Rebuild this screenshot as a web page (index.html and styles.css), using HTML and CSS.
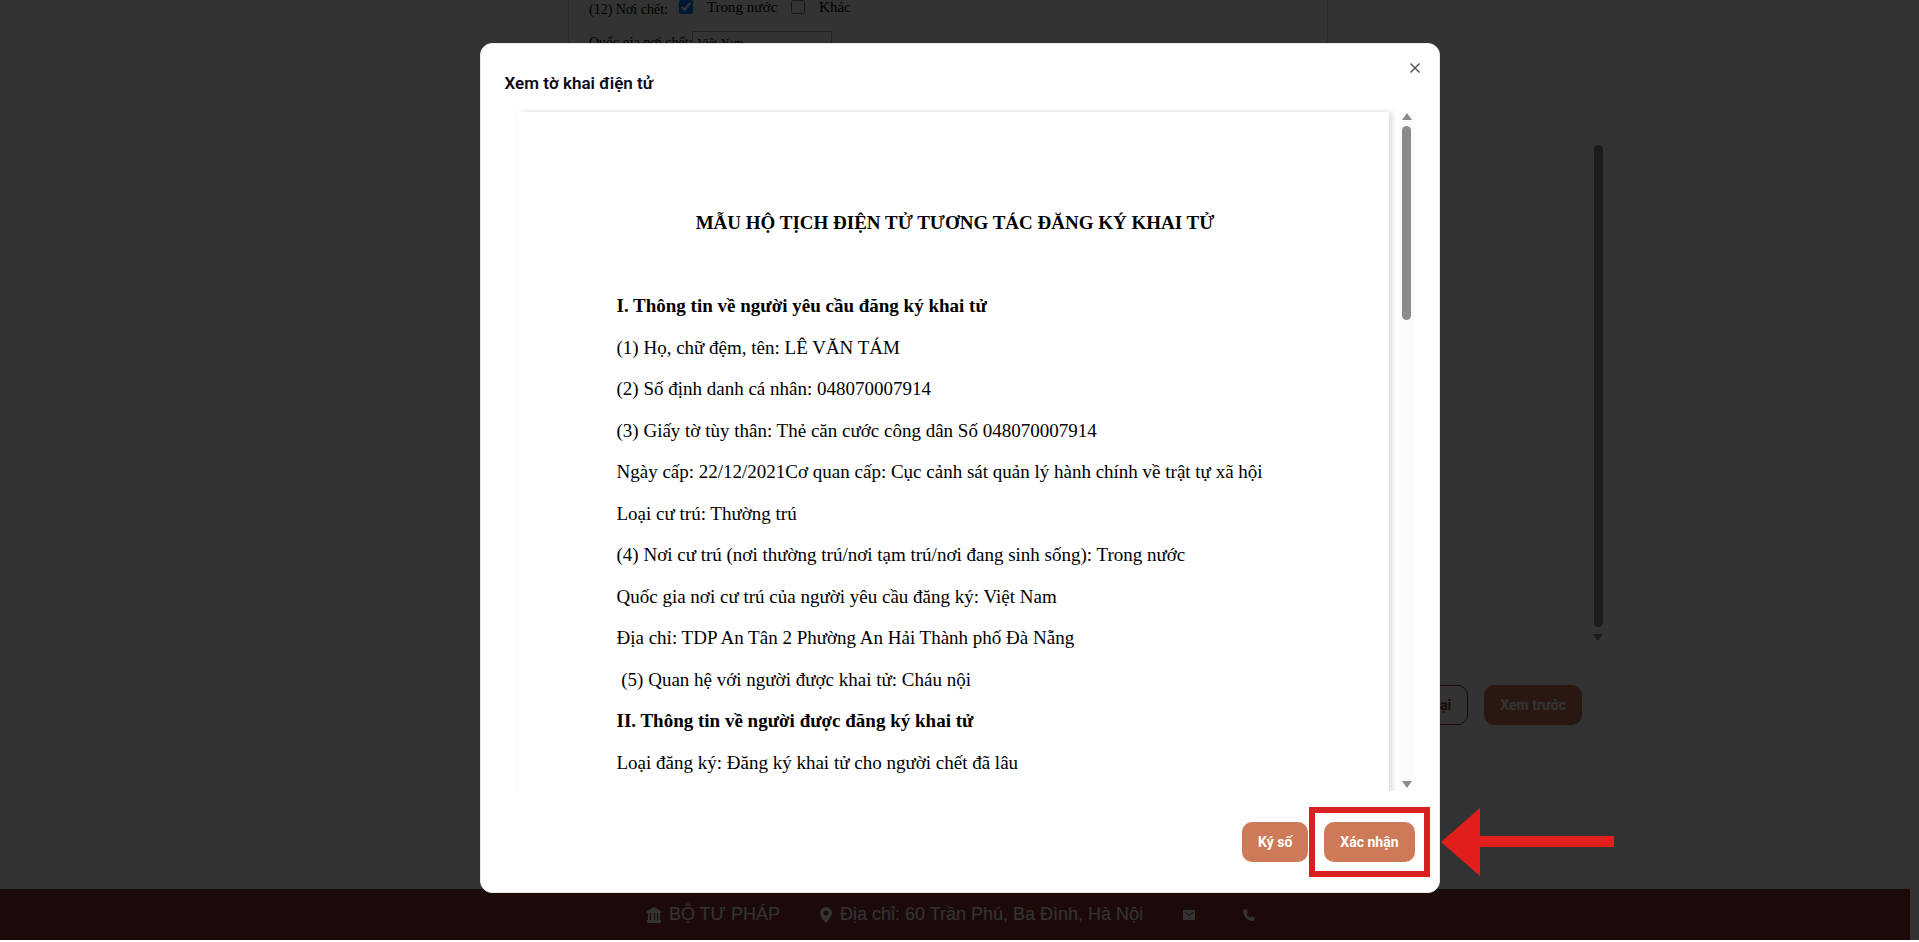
FILE: index.html
```html
<!DOCTYPE html>
<html lang="vi">
<head>
  <meta charset="UTF-8">
  <meta name="viewport" content="width=device-width, initial-scale=1">
  <title>Xem tờ khai điện tử</title>
  <link rel="stylesheet" href="styles.css">
</head>
<body>
  <div class="page">
    <main class="panel">
      <div class="form-area">
        <form class="paper" id="declaration">
          <div class="row place">
            <span class="label">(12) Nơi chết:</span>
            <input type="checkbox" id="inside" checked>
            <label for="inside">Trong nước</label>
            <input type="checkbox" id="other">
            <label for="other">Khác</label>
          </div>
          <div class="row">
            <label for="country">Quốc gia nơi chết:</label>
            <input type="text" id="country" value="Việt Nam">
          </div>
        </form>
        <div class="scroll">
          <span class="thumb"></span>
          <span class="arrow-down"></span>
        </div>
      </div>
      <div class="actions">
        <button type="button" class="btn btn-outline">Quay lại</button>
        <button type="button" class="btn">Xem trước</button>
      </div>
    </main>
    <footer class="footer">
      <span class="item">
        <svg width="14" height="16" viewBox="0 0 14 16"><path d="M7 0l7 4v2H0V4zM1 6h2v7H1zm3 0h3v7H4zm4 0h2v7H8zM11 6h2v7h-2zM0 13h14v3H0z"/></svg>
        <span>BỘ TƯ PHÁP</span>
      </span>
      <span class="item">
        <svg width="12" height="16" viewBox="0 0 12 16"><path fill-rule="evenodd" d="M6 0a6 6 0 0 1 6 6c0 3-3.500 7.500-6 10C3.500 13.500 0 9 0 6a6 6 0 0 1 6-6zm0 3.500a2.500 2.500 0 1 0 0 5 2.500 2.500 0 0 0 0-5z"/></svg>
        <span>Địa chỉ: 60 Trần Phú, Ba Đình, Hà Nội</span>
      </span>
      <span class="item">
        <svg width="12" height="10" viewBox="0 0 12 10"><path fill-rule="evenodd" d="M1 0h10a1 1 0 0 1 1 1v8a1 1 0 0 1-1 1H1a1 1 0 0 1-1-1V1a1 1 0 0 1 1-1zm.5 1.500v1L6 6l4.500-3.500v-1L6 5z"/></svg>
        <span></span>
      </span>
      <span class="item">
        <svg width="12" height="12" viewBox="0 0 12 12"><path d="M3.500 0L1 .8C0 1.200 0 2 .2 3.300 1 8 4.500 11.500 9 12c1 .1 1.700 0 2-.8l.9-2.400-3.200-1.600-1.500 1.500C5.500 8 4.200 6.500 3.600 4.900L5 3.500z"/></svg>
        <span></span>
      </span>
    </footer>
    <div class="page-scroll"></div>
  </div>

  <div class="overlay">
    <section class="modal" role="dialog" aria-labelledby="modalTitle">
      <button type="button" class="close" aria-label="Đóng">
        <svg width="12" height="12" viewBox="0 0 12 12"><path d="M1.500 1.500l9 9M10.500 1.500l-9 9"/></svg>
      </button>
      <h2 id="modalTitle">Xem tờ khai điện tử</h2>
      <div class="viewer">
        <article class="doc">
          <h1>MẪU HỘ TỊCH ĐIỆN TỬ TƯƠNG TÁC ĐĂNG KÝ KHAI TỬ</h1>
          <div class="lines">
            <p><b>I. Thông tin về người yêu cầu đăng ký khai tử</b></p>
            <p>(1) Họ, chữ đệm, tên: LÊ VĂN TÁM</p>
            <p>(2) Số định danh cá nhân: 048070007914</p>
            <p>(3) Giấy tờ tùy thân: Thẻ căn cước công dân Số 048070007914</p>
            <p>Ngày cấp: 22/12/2021Cơ quan cấp: Cục cảnh sát quản lý hành chính về trật tự xã hội</p>
            <p>Loại cư trú: Thường trú</p>
            <p>(4) Nơi cư trú (nơi thường trú/nơi tạm trú/nơi đang sinh sống): Trong nước</p>
            <p>Quốc gia nơi cư trú của người yêu cầu đăng ký: Việt Nam</p>
            <p>Địa chỉ: TDP An Tân 2 Phường An Hải Thành phố Đà Nẵng</p>
            <p>&nbsp;(5) Quan hệ với người được khai tử: Cháu nội</p>
            <p><b>II. Thông tin về người được đăng ký khai tử</b></p>
            <p>Loại đăng ký: Đăng ký khai tử cho người chết đã lâu</p>
          </div>
        </article>
        <div class="doc-scroll">
          <span class="arrow-up"></span>
          <span class="thumb"></span>
          <span class="arrow-down"></span>
        </div>
      </div>
      <div class="modal-actions">
        <button type="button" class="btn">Ký số</button>
        <div class="target">
          <button type="button" class="btn">Xác nhận</button>
          <div class="highlight"></div>
          <svg class="pointer" width="174" height="68" viewBox="0 0 174 68"><path d="M0 34L39 0v28h134v11H39v29z"/></svg>
        </div>
      </div>
    </section>
  </div>
</body>
</html>
```
FILE: styles.css
```css
* {
  box-sizing: border-box;
}
body {
  margin: 0;
  background: #fff;
  font-family: Roboto, "Liberation Sans", sans-serif;
  overflow: hidden;
}
button, input {
  font-family: inherit;
}
.page {
  position: relative;
  height: calc(100vh - 2px);
  padding-right: 9px;
  background: #f8f8ff;
  display: flex;
  flex-direction: column;
}
.page-scroll {
  position: absolute;
  top: 0;
  right: 0;
  bottom: 0;
  width: 9px;
  background: #fcfcfc;
}

/* Form behind the dialog */
.panel {
  width: 1350px;
  max-width: 100%;
  height: 767px;
  margin: 0 auto;
  background: #fff;
  display: flex;
  flex-direction: column;
}
.form-area {
  position: relative;
  flex: 1;
  min-height: 0;
  overflow: hidden;
}
.paper {
  width: 760px;
  height: 100%;
  margin-left: 288px;
  padding: 0 20px;
  border: solid #d8d8d8;
  border-width: 0 1px;
  font: 14px/20px "Liberation Serif", serif;
}
.row {
  display: flex;
  align-items: center;
  height: 20px;
}
.row + .row {
  margin-top: 13px;
}
.place {
  align-items: flex-start;
}
.place label {
  font-size: 15px;
  line-height: 14px;
}
.row input[type="checkbox"] {
  width: 14px;
  height: 14px;
  margin: 0 14px;
}
.row .label + input[type="checkbox"] {
  margin-left: 11px;
}
.row input[type="text"] {
  width: 140px;
  height: 24px;
  border: 1px solid #aaa;
  padding: 0 4px;
  font: 12px "Liberation Serif", serif;
}
.scroll {
  position: absolute;
  top: 145px;
  right: 27px;
  display: flex;
  flex-direction: column;
  align-items: center;
  gap: 7px;
}
.scroll .thumb {
  width: 9px;
  height: 482px;
  border-radius: 5px;
  background: #8b8b8b;
}
.arrow-down, .arrow-up {
  border: 5px solid transparent;
}
.arrow-down {
  border-top: 7px solid #8b8b8b;
  border-bottom: 0;
}
.arrow-up {
  border-bottom: 7px solid #8b8b8b;
  border-top: 0;
}
.actions {
  display: flex;
  justify-content: flex-end;
  gap: 16px;
  padding: 16px 48px 42px;
}
.btn {
  height: 40px;
  padding: 0 16px;
  border: 0;
  border-radius: 10px;
  background: #ce7a58;
  color: #fff;
  font-size: 14px;
  font-weight: 700;
}
.btn-outline {
  border: 1px solid #7a3a20;
  background: #fff;
  color: #7a3a20;
}

.footer {
  margin-top: auto;
  height: 51px;
  background: #8c3232;
  color: #fff;
  font: 18px "Liberation Sans", Arial, sans-serif;
  display: flex;
  justify-content: center;
  align-items: center;
  gap: 40px;
}
.footer .item {
  display: flex;
  align-items: center;
  gap: 8px;
}
.footer svg {
  fill: #fff;
}

/* Dialog */
.overlay {
  position: fixed;
  inset: 0 0 2px;
  background: rgba(0, 0, 0, 0.8);
}
.modal {
  position: absolute;
  top: 43px;
  left: 50%;
  width: 960px;
  height: 850px;
  transform: translateX(-50%);
  padding: 24px;
  border: 1px solid #e5e5e5;
  border-radius: 12px;
  background: #fff;
  display: flex;
  flex-direction: column;
}
.modal h2 {
  margin: 0;
  padding-top: 3px;
  font-size: 17px;
  line-height: 24px;
  font-weight: 600;
  color: #0a0a1a;
}
.close {
  position: absolute;
  top: 16px;
  right: 16px;
  width: 16px;
  height: 16px;
  padding: 0;
  border: 0;
  background: none;
  display: grid;
  place-items: center;
}
.close svg {
  fill: none;
  stroke: #555;
  stroke-width: 1.500;
}
.viewer {
  flex: 1;
  min-height: 0;
  margin-top: 14px;
  padding: 3px 0 0 13px;
  overflow: hidden;
  display: flex;
  justify-content: space-between;
}
.doc {
  width: 871px;
  height: 110%;
  padding: 100px 95px 0 99px;
  box-shadow: 3px 0 6px rgba(0, 0, 0, 0.15);
  font: 19px/21px "Liberation Serif", serif;
  color: #000;
}
.doc h1 {
  margin: 0 0 62px;
  font-size: 19px;
  line-height: 21px;
  text-align: center;
  white-space: nowrap;
}
.doc p {
  margin: 0 0 21px;
  white-space: nowrap;
}
.doc p:nth-child(even) {
  margin-bottom: 20px;
}
.doc-scroll {
  width: 16px;
  padding: 1px 0 3px;
  background: #fbfbfb;
  display: flex;
  flex-direction: column;
  align-items: center;
}
.doc-scroll .thumb {
  width: 9px;
  height: 194px;
  margin-top: 6px;
  border-radius: 5px;
  background: #8b8b8b;
}
.doc-scroll .arrow-down {
  margin-top: auto;
}
.modal-actions {
  display: flex;
  justify-content: flex-end;
  gap: 16px;
  padding: 31px 0 6px;
}
.target {
  position: relative;
}
.highlight {
  position: absolute;
  inset: -15px;
  border: 6px solid #d7201f;
  pointer-events: none;
}
.pointer {
  position: absolute;
  top: -14px;
  left: calc(100% + 26px);
  fill: #e01e1b;
}
```
